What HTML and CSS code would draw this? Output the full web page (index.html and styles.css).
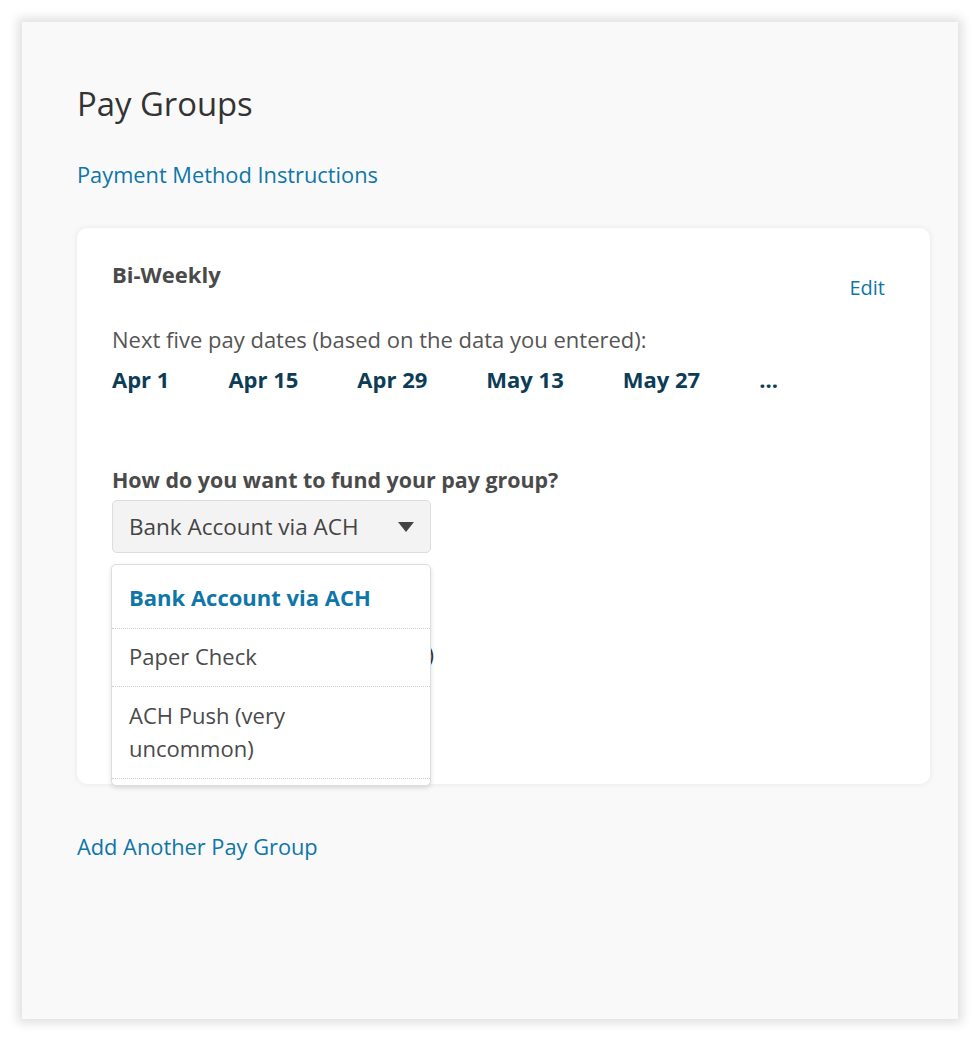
FILE: index.html
```html
<!DOCTYPE html>
<html>
<head>
<meta charset="utf-8">
<link rel="stylesheet" href="styles.css">
</head>
<body>
<div class="panel">
  <h1 class="title">Pay Groups</h1>
  <a class="link instructions">Payment Method Instructions</a>
  <div class="card">
    <div class="card-head">
      <div class="group-name">Bi-Weekly</div>
      <a class="link edit">Edit</a>
    </div>
    <p class="dates-label">Next five pay dates (based on the data you entered):</p>
    <div class="dates">
      <span>Apr 1</span>
      <span>Apr 15</span>
      <span>Apr 29</span>
      <span>May 13</span>
      <span>May 27</span>
      <span>...</span>
    </div>
    <div class="fund">
      <div class="fund-label">How do you want to fund your pay group?</div>
      <div class="select-wrap">
        <div class="select">
          <span>Bank Account via ACH</span>
          <svg class="caret" width="16" height="10" viewBox="0 0 16 10"><path d="M0 0 H16 L8 10 Z" fill="#444"/></svg>
        </div>
        <div class="behind">Routing number (9 digits)</div>
        <ul class="menu">
          <li class="selected">Bank Account via ACH</li>
          <li>Paper Check</li>
          <li>ACH Push (very uncommon)</li>
        </ul>
      </div>
    </div>
  </div>
  <a class="link add">Add Another Pay Group</a>
</div>
</body>
</html>
```

FILE: styles.css
```css
html, body {
  margin: 0;
  padding: 0;
  background: #ffffff;
}
body {
  padding: 22px;
  font-family: "Open Sans", "Lato", sans-serif;
  color: #444;
}
.panel {
  width: 936px;
  height: 997px;
  box-sizing: border-box;
  background: #f9f9f9;
  box-shadow: 0 0 10px 4px rgba(0, 0, 0, 0.13);
  padding: 62px 28px 0 55px;
}
.title {
  margin: 0;
  font-size: 32.8px;
  font-weight: 400;
  line-height: 40px;
  color: #333;
}
.link {
  color: #0e76a8;
  font-size: 21.8px;
  line-height: 26px;
  display: inline-block;
}
.instructions {
  margin-top: 38px;
}
.card {
  margin-top: 40px;
  background: #fff;
  border-radius: 10px;
  box-shadow: 0 0 6px rgba(0, 0, 0, 0.08);
  padding: 33px 45px 0 35px;
  height: 556px;
  box-sizing: border-box;
}
.card-head {
  display: flex;
  justify-content: space-between;
  align-items: flex-start;
}
.group-name {
  font-weight: 700;
  font-size: 22px;
  line-height: 26px;
  color: #4a4a4a;
}
.edit {
  margin-top: 14px;
  font-size: 20px;
}
.dates-label {
  margin: 25px 0 0;
  font-size: 22px;
  line-height: 26px;
  color: #555;
}
.dates {
  display: flex;
  gap: 59px;
  margin-top: 14px;
  font-size: 22px;
  line-height: 26px;
  font-weight: 700;
  color: #0d3d56;
}
.fund {
  margin-top: 75px;
}
.fund-label {
  font-size: 21.4px;
  font-weight: 700;
  line-height: 26px;
  color: #4a4a4a;
}
.select-wrap {
  position: relative;
  width: 319px;
  margin-top: 7px;
}
.select {
  height: 53px;
  box-sizing: border-box;
  background: #f3f3f3;
  border: 1px solid #ddd;
  border-radius: 5px;
  display: flex;
  align-items: center;
  justify-content: space-between;
  padding: 0 16px 0 16px;
  font-size: 22.5px;
  color: #444;
}
.caret {
  display: block;
}
.behind {
  width: 322px;
  margin-top: 86px;
  font-size: 22px;
  line-height: 30px;
  text-align: right;
  white-space: nowrap;
  color: #333;
}
.menu {
  position: absolute;
  top: 64px;
  left: -1px;
  width: 320px;
  margin: 0;
  padding: 0 0 6px;
  list-style: none;
  background: #fff;
  border: 1px solid #ddd;
  border-radius: 5px;
  box-shadow: 0 2px 5px rgba(0, 0, 0, 0.12);
  box-sizing: border-box;
}
.menu li {
  padding: 11px 90px 13px 17px;
  font-size: 22px;
  line-height: 33px;
  color: #4a4a4a;
  border-bottom: 1px dotted #cfcfcf;
}
.menu li:first-child {
  padding-top: 16px;
  padding-bottom: 14px;
}
.menu li:last-child {
  padding-top: 11.5px;
  padding-bottom: 13.5px;
}
.menu li.selected {
  font-weight: 700;
  color: #0e76a8;
  white-space: nowrap;
}
.add {
  margin-top: 50px;
}
```
